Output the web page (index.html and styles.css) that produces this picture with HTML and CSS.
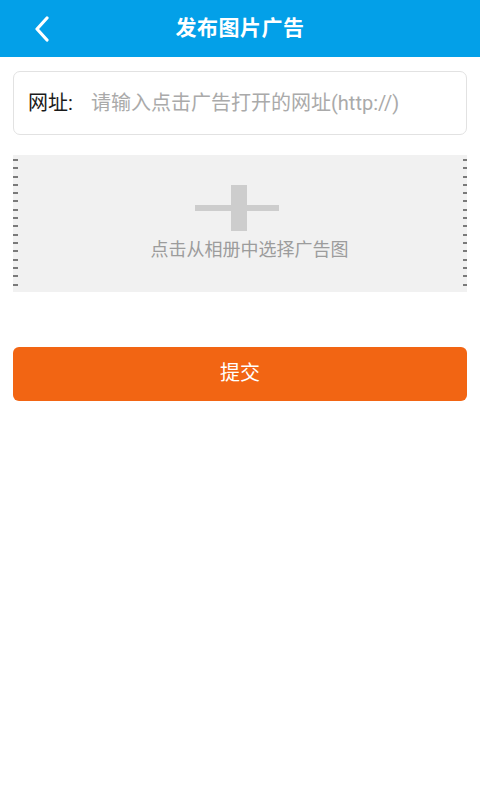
FILE: index.html
```html
<!DOCTYPE html>
<html lang="zh-CN">
<head>
<meta charset="utf-8">
<title>发布图片广告</title>
<link rel="stylesheet" href="styles.css">
</head>
<body>
<header class="topbar">
  <a class="back" href="#" aria-label="返回">
    <svg width="16" height="26" viewBox="0 0 16 26"><path d="M13 2 L3 13 L13 24" fill="none" stroke="#fff" stroke-width="3.2" stroke-linecap="round" stroke-linejoin="round"/></svg>
  </a>
  <h1 class="title">发布图片广告</h1>
</header>
<main class="content">
  <label class="field">
    <span class="field-label">网址:</span>
    <input class="field-input" type="text" placeholder="请输入点击广告打开的网址(http://)">
  </label>
  <div class="upload">
    <div class="plus">
      <span class="plus-h"></span>
      <span class="plus-v"></span>
    </div>
    <div class="upload-text">点击从相册中选择广告图</div>
  </div>
  <button class="submit" type="button">提交</button>
</main>
</body>
</html>
```

FILE: styles.css
```css
* { box-sizing: border-box; }
html, body { margin: 0; padding: 0; background: #fff; }
body {
  font-family: Roboto, "Noto Sans CJK SC", sans-serif;
  width: 480px;
  height: 800px;
}
.topbar {
  position: relative;
  height: 57px;
  background: #03a0e8;
  display: flex;
  align-items: center;
  justify-content: center;
}
.back {
  position: absolute;
  left: 34px;
  top: 16px;
  display: block;
  width: 16px;
  height: 26px;
}
.back svg { display: block; }
.title {
  margin: 0;
  color: #fff;
  font-size: 21px;
  font-weight: bold;
  letter-spacing: 0.5px;
  line-height: 1;
  padding-bottom: 1px;
}
.content {
  padding: 14px 13px 0;
  display: flex;
  flex-direction: column;
}
.field {
  height: 64px;
  border: 1px solid #e2e2e2;
  border-radius: 7px;
  display: flex;
  align-items: center;
  padding-left: 14px;
  background: #fff;
}
.field-label {
  font-size: 20px;
  color: #1a1a1a;
  width: 64px;
  flex: none;
  line-height: 1;
}
.field-input {
  flex: 1;
  min-width: 0;
  border: 0;
  outline: none;
  background: transparent;
  font-family: Roboto, "Noto Sans CJK SC", sans-serif;
  font-size: 20px;
  color: #333;
  padding: 0;
  margin-left: -1px;
}
.field-input::placeholder { color: #aaaaaa; }
.upload {
  margin-top: 20px;
  height: 137px;
  background-color: #f1f1f1;
  background-image:
    repeating-linear-gradient(to bottom, transparent 0 4px, #7a7a7a 4px 6px, transparent 6px 8.3px),
    repeating-linear-gradient(to bottom, transparent 0 4px, #7a7a7a 4px 6px, transparent 6px 8.3px);
  background-size: 5px 100%, 4px 100%;
  background-position: left top, right top;
  background-repeat: no-repeat;
  display: flex;
  flex-direction: column;
  align-items: center;
}
.plus {
  position: relative;
  margin-top: 30px;
  width: 84px;
  height: 46px;
  margin-left: -6px;
}
.plus-h {
  position: absolute;
  left: 0;
  top: 20px;
  width: 84px;
  height: 6px;
  background: #cdcdcd;
}
.plus-v {
  position: absolute;
  left: 36px;
  top: 0;
  width: 16px;
  height: 46px;
  background: #cdcdcd;
}
.upload-text {
  margin-top: 8px;
  margin-left: 19px;
  font-size: 18px;
  color: #9c9c9c;
  line-height: 22px;
}
.submit {
  margin-top: 55px;
  height: 54px;
  border: 0;
  border-radius: 6px;
  background: #f26513;
  color: #fff;
  font-family: Roboto, "Noto Sans CJK SC", sans-serif;
  font-size: 20px;
  line-height: 1;
  padding: 0 0 2px;
  cursor: pointer;
}
```
